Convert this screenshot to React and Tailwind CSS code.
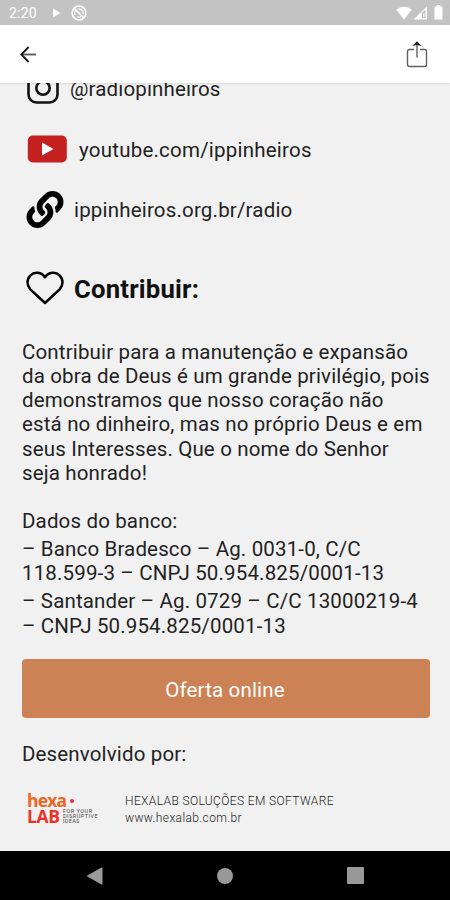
import React from "react";

function StatusBar() {
  return (
    <div className="flex h-[25px] shrink-0 items-center bg-[#c3c3c3] pl-[9px] pr-[7px] text-white">
      <span className="w-[30px] text-[14px] leading-none tracking-[0.200px] whitespace-nowrap">2:20</span>
      <svg className="ml-[14px] h-[10px] w-[8px]" viewBox="0 0 8 10" fill="currentColor">
        <path d="M0 0.5 7.5 5 0 9.5z" />
      </svg>
      <svg className="ml-[10px] h-4 w-4" viewBox="0 0 16 16" fill="none" stroke="currentColor">
        <circle cx="8" cy="8" r="6.9" strokeWidth="1.5" />
        <path d="M4.200 9.800A4.200 4.200 0 0 1 4.500 5.500M7 4A4.200 4.200 0 0 1 12 9.200M10 11.600A4.200 4.200 0 0 1 6.200 11.800" strokeWidth="1.2" />
        <path d="M3.5 3.5 12.5 12.5" strokeWidth="1.5" />
      </svg>
      <div className="flex-1" />
      <svg className="h-[14px] w-[16px]" viewBox="0 0 16 14" fill="currentColor">
        <path d="M.3 3.8C4.8-.4 11.200-.4 15.700 3.800L8 13.500z" />
      </svg>
      <svg className="ml-[1px] h-[14px] w-[15px]" viewBox="0 0 15 14">
        <path d="M.5 13.500 14 .5V13.500z" fill="currentColor" />
        <path d="M9 6.800 12.500 3.500V12H9z" fill="#c3c3c3" />
        <path d="M10.300 8.200 11.500 7v4H10.300z" fill="currentColor" />
      </svg>
      <svg className="ml-[6px] h-[15px] w-[9px]" viewBox="0 0 9 15" fill="currentColor">
        <path d="M2.700 0h3.600v1.500H8.500V14.500H.5V1.500h2.200z" />
      </svg>
    </div>
  );
}

function AppBar() {
  return (
    <header className="z-10 flex h-[58px] shrink-0 items-center justify-between bg-white pl-5 pr-[22px] shadow-[0_1px_2px_rgba(0,0,0,0.1)]">
      <svg className="mt-px h-[17px] w-[17px]" viewBox="0 0 17 17" fill="none" strokeWidth="1.8">
        <path d="M1.300 8.500H16" stroke="#555" />
        <path d="M8.600 1 1.300 8.500 8.600 16" stroke="#161616" />
      </svg>
      <svg className="mb-[1px] h-[28px] w-[22px]" viewBox="0 0 22 28" fill="none" stroke="#606060" strokeWidth="1.4">
        <path d="M8 9.500H3.500a2 2 0 0 0-2 2V24.500A2 2 0 0 0 3.500 26.500H18.500A2 2 0 0 0 20.500 24.500V11.500A2 2 0 0 0 18.500 9.500H14M11 17.500V3" />
        <path d="M6.300 6 11 1.200 15.700 6 11 5z" fill="#222" stroke="none" />
      </svg>
    </header>
  );
}

function InstagramIcon() {
  return (
    <svg className="h-8 w-8" viewBox="0 0 32 32" fill="none" stroke="#111" strokeWidth="2.600">
      <rect x="1.500" y="1.500" width="29" height="29" rx="8" />
      <circle cx="16" cy="16" r="6.700" />
      <circle cx="24.500" cy="7.500" r="1.900" fill="#000" stroke="none" />
    </svg>
  );
}

function YoutubeIcon() {
  return (
    <svg className="h-[28px] w-[40px]" viewBox="0 0 40 28">
      <rect x="0.800" y="0.500" width="39" height="27" rx="5" fill="#c4201f" />
      <path d="M15 7.500 26.500 14 15 20.500z" fill="#fff" />
    </svg>
  );
}

function LinkIcon() {
  return (
    <svg className="h-[37px] w-[38px]" viewBox="0 0 512 512">
      <path d="M326.612 185.391c59.747 59.809 58.927 155.698.36 214.590-.110.120-.240.250-.360.370l-67.200 67.200c-59.270 59.270-155.699 59.262-214.960 0-59.270-59.260-59.270-155.700 0-214.960l37.106-37.106c9.840-9.840 26.786-3.300 27.294 10.606.648 17.722 3.826 35.527 9.690 52.721 1.986 5.822.567 12.262-3.783 16.612l-13.087 13.087c-28.026 28.026-28.905 73.660-1.155 101.960 28.024 28.579 74.086 28.749 102.325.510l67.200-67.190c28.191-28.191 28.073-73.757 0-101.830-3.701-3.694-7.429-6.564-10.341-8.569a16.037 16.037 0 0 1-6.947-12.606c-.396-10.567 3.348-21.456 11.698-29.806l21.054-21.055c5.521-5.521 14.182-6.199 20.584-1.731a152.482 152.482 0 0 1 20.522 17.197zM467.547 44.449c-59.261-59.262-155.690-59.270-214.960 0l-67.200 67.200c-.120.120-.250.250-.360.370-58.566 58.892-59.387 154.781.360 214.590a152.454 152.454 0 0 0 20.521 17.196c6.402 4.468 15.064 3.789 20.584-1.731l21.054-21.055c8.350-8.350 12.094-19.239 11.698-29.806a16.037 16.037 0 0 0-6.947-12.606c-2.912-2.005-6.640-4.875-10.341-8.569-28.073-28.073-28.191-73.639 0-101.830l67.200-67.190c28.239-28.239 74.300-28.069 102.325.510 27.750 28.300 26.872 73.934-1.155 101.960l-13.087 13.087c-4.350 4.350-5.769 10.790-3.783 16.612 5.864 17.194 9.042 34.999 9.690 52.721.509 13.906 17.454 20.446 27.294 10.606l37.106-37.106c59.271-59.259 59.271-155.699.001-214.959z" />
    </svg>
  );
}

function HeartIcon() {
  return (
    <svg className="h-[34px] w-[38px]" viewBox="0 0 38 34" fill="none" stroke="#000" strokeWidth="2.500" strokeLinejoin="round">
      <path d="M19 6.300C15.500 1 8.500.200 4.500 4.300.500 8.300.500 14 4.300 18.300L19 32 33.700 18.300C37.500 14 37.500 8.300 33.500 4.300 29.500.200 22.500 1 19 6.300z" />
    </svg>
  );
}

function HexalabLogo() {
  return (
    <div className="flex w-[73px] flex-col gap-px font-['Open_Sans',sans-serif] font-bold">
      <div className="flex h-[15px] items-center">
        <span className="text-[17.500px] leading-[15px] tracking-[-0.800px] text-[#f0641f]">hexa</span>
        <span className="ml-[4px] h-[4px] w-[4px] rounded-full bg-[#e22e46]" />
      </div>
      <div className="flex h-[15px] items-center">
        <span className="w-[33px] text-[17.500px] leading-[15px] tracking-[-0.400px] text-[#ec3226]">LAB</span>
        <div className="ml-[3px] flex flex-col font-[Roboto,sans-serif] text-[5.500px] leading-[5px] font-normal whitespace-nowrap text-[#444]">
          <span className="tracking-[0.500px]">FOR YOUR</span>
          <span className="tracking-[0.500px]">DISRUPTIVE</span>
          <span className="tracking-[0.300px]">IDEAS</span>
        </div>
      </div>
    </div>
  );
}

function NavigationBar() {
  return (
    <nav className="z-10 flex h-[49px] shrink-0 items-center bg-black pl-[86px] text-[#999]">
      <svg className="h-[18px] w-[17px]" viewBox="0 0 17 18" fill="currentColor">
        <path d="M.500 9 15.500.500Q16.500 0 16.500 1.500V16.500Q16.500 18 15.500 17.500z" />
      </svg>
      <div className="ml-[114px] h-4 w-4 rounded-full bg-[#999]" />
      <div className="ml-[114px] h-[17px] w-[17px] rounded-[1px] bg-[#999]" />
    </nav>
  );
}

export default function App() {
  return (
    <div className="flex h-[900px] w-[450px] flex-col overflow-hidden bg-[#f1f1f1] font-[Roboto,sans-serif] text-[#222]">
      <StatusBar />
      <AppBar />
      <main className="flex-1 overflow-hidden px-[22px] text-[20.500px] leading-[24.150px] tracking-[0.150px] whitespace-nowrap">
        <div className="-mt-[11px] flex h-8 items-center pl-[5px]">
          <InstagramIcon />
          <span className="mt-[2px] ml-[11px]">@radiopinheiros</span>
        </div>
        <div className="mt-[31px] flex h-[28px] items-center pl-[5px]">
          <YoutubeIcon />
          <span className="mt-[2px] ml-[12px] tracking-[0.220px]">youtube.com/ippinheiros</span>
        </div>
        <div className="mt-[27px] flex h-[38px] items-center pl-[4px]">
          <LinkIcon />
          <span className="mt-[2px] ml-[10px] tracking-[0.180px]">ippinheiros.org.br/radio</span>
        </div>
        <h2 className="mt-[43px] flex h-[34px] items-center pl-[4px] text-[25.700px] font-bold tracking-[0.200px] text-[#111]">
          <HeartIcon />
          <span className="mt-[2px] ml-[10px]">Contribuir:</span>
        </h2>
        <p className="mt-[35px]">
          Contribuir para a manutenção e expansão<br />
          da obra de Deus é um grande privilégio, pois<br />
          demonstramos que nosso coração não<br />
          está no dinheiro, mas no próprio Deus e em<br />
          seus Interesses. Que o nome do Senhor<br />
          seja honrado!
        </p>
        <p className="mt-[24px]">Dados do banco:</p>
        <p className="mt-[4px]">
          – Banco Bradesco – Ag. 0031-0, C/C<br />
          118.599-3 – CNPJ 50.954.825/0001-13
        </p>
        <p className="mt-[4px]">
          – Santander – Ag. 0729 – C/C 13000219-4<br />
          – CNPJ 50.954.825/0001-13
        </p>
        <button className="mt-[21px] flex h-[59px] w-[408px] items-center justify-center rounded-[4px] bg-[#cd8255] pt-[4px] pr-[2px] text-white">
          Oferta online
        </button>
        <p className="mt-[24px]">Desenvolvido por:</p>
        <div className="mt-[26px] flex h-[34px] items-center pl-[5px]">
          <HexalabLogo />
          <div className="mt-[3px] ml-[25px] text-[12px] leading-[17.500px] font-light tracking-[0.380px]">
            <p>HEXALAB SOLUÇÕES EM SOFTWARE</p>
            <p>www.hexalab.com.br</p>
          </div>
        </div>
      </main>
      <NavigationBar />
    </div>
  );
}
